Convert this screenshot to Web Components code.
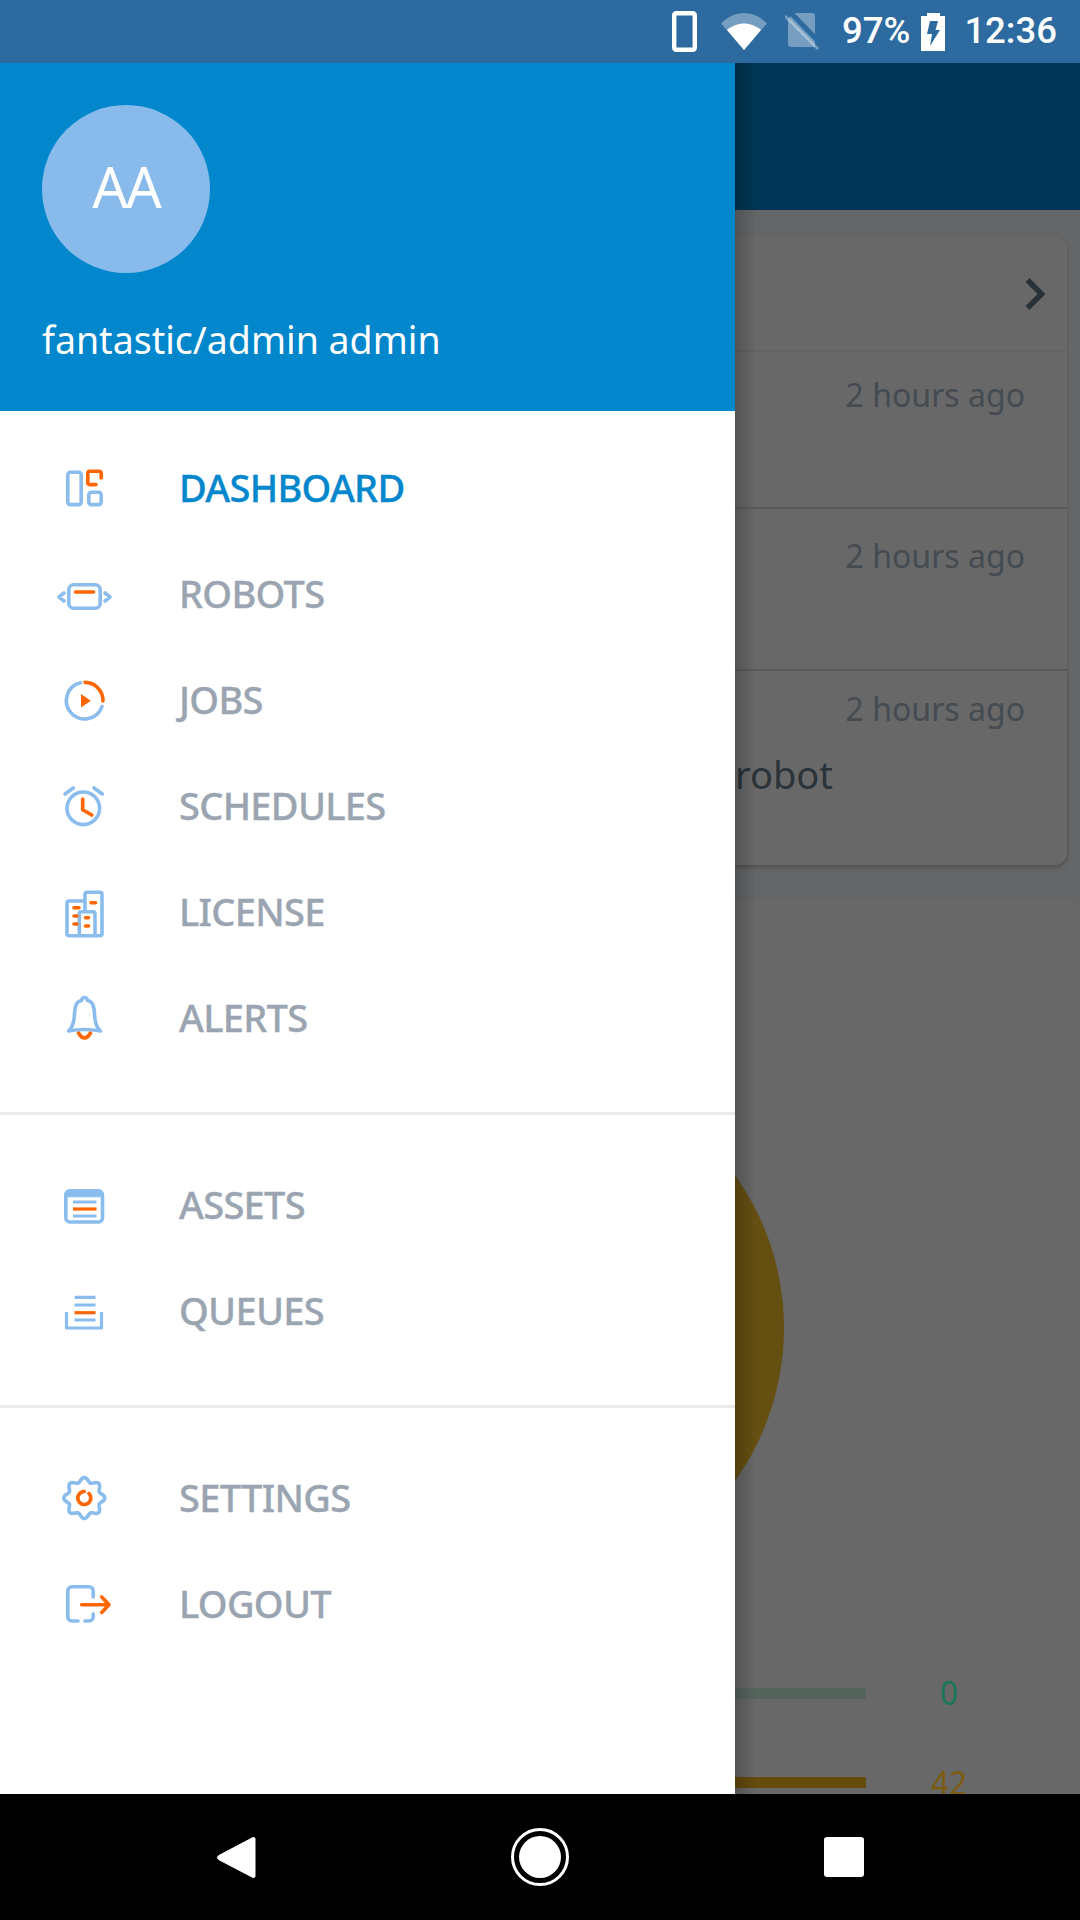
<!DOCTYPE html>
<html>
<head>
<meta charset="utf-8">
<style>
  html, body { margin: 0; padding: 0; background: #000; }
  body { width: 1080px; height: 1920px; overflow: hidden; font-family: "Noto Sans", sans-serif; display: flex; flex-direction: column; }
</style>
</head>
<body>
<status-bar></status-bar>
<app-screen>
  <nav-drawer slot="drawer" user="fantastic/admin admin" initials="AA">
    <menu-group>
      <menu-item icon="dashboard" active>DASHBOARD</menu-item>
      <menu-item icon="robots">ROBOTS</menu-item>
      <menu-item icon="jobs">JOBS</menu-item>
      <menu-item icon="schedules">SCHEDULES</menu-item>
      <menu-item icon="license">LICENSE</menu-item>
      <menu-item icon="alerts">ALERTS</menu-item>
    </menu-group>
    <menu-group>
      <menu-item icon="assets">ASSETS</menu-item>
      <menu-item icon="queues">QUEUES</menu-item>
    </menu-group>
    <menu-group last>
      <menu-item icon="settings">SETTINGS</menu-item>
      <menu-item icon="logout">LOGOUT</menu-item>
    </menu-group>
  </nav-drawer>
  <dimmed-page slot="page"></dimmed-page>
</app-screen>
<nav-bar></nav-bar>

<script>
// 歯車の輪郭。8つの山を持つ閉じた線を、中心(38.3, 25)の周りに作る。
function gearPath() {
  const points = [];
  for (let i = 0; i < 96; i++) {
    const t = i / 96 * Math.PI * 2;
    const r = 18.3 + 2.2 * Math.cos(8 * t);
    points.push((38.3 + r * Math.sin(t)).toFixed(2) + " " + (25 - r * Math.cos(t)).toFixed(2));
  }
  return "M" + points.join("L") + "z";
}

// 青とオレンジの2色で描くメニューアイコン。viewBoxは80x48で、行の中央に置く。
const ICONS = {
  dashboard: `<rect x="21.8" y="9.2" width="13.4" height="32.4" rx="2.5" class="b"/>
    <path d="M55.2 15V10.2a2 2 0 0 0-2-2H43.800a2 2 0 0 0-2 2v9.400a2 2 0 0 0 2 2H50" class="o"/>
    <rect x="42.8" y="29.2" width="12.4" height="12.4" rx="2.5" class="b"/>`,
  robots: `<rect x="22.8" y="15.8" width="31.4" height="23.4" rx="5" class="b"/>
    <path d="M29.500 23H47.500" class="o"/>
    <path d="M18 24 13 28l5 4M59 24l5 4-5 4" class="b"/>`,
  jobs: `<path d="M34.500 7.800A18.300 18.300 0 1 0 56 31.500" class="b"/>
    <path d="M39 7.400A18.300 18.300 0 0 1 57 26" class="o"/>
    <path d="M35 19 44.800 25.700 35 32.400z" fill="#ff6600"/>`,
  schedules: `<circle cx="37.300" cy="27.300" r="16.300" class="b"/>
    <path d="M19 13 27.300 7M48 7l8.300 6" class="b"/>
    <path d="M36.700 18V28.700L45.700 34" class="o"/>`,
  license: `<path d="M39 24V7.300a2 2 0 0 1 2-2h13a2 2 0 0 1 2 2v39.400a2 2 0 0 1-2 2H23a2 2 0 0 1-2-2V16a2 2 0 0 1 2-2h16" class="b"/>
    <path d="M33.300 48.700V26.700a2 2 0 0 1 2-2H47a2 2 0 0 1 2 2v22" class="b"/>
    <path d="M28 20.700h5M45 15.700h4.500M28 29h3M28 37h3M39.500 30.700h3M39.500 39h3" class="o"/>`,
  alerts: `<path d="M32.500 40Q38.500 50 44.500 40" class="o"/>
    <path d="M22.500 38Q27 34 28 26L29 16Q30 8.500 35.500 7.500 36 4.500 38.500 4.500 41 4.500 41.500 7.500 47 8.500 48 16L49 26Q50 34 54.500 38 38.500 35 22.500 38z" class="b"/>`,
  assets: `<rect x="19.800" y="10.800" width="36.700" height="31.200" rx="4" class="b"/>
    <path d="M19.800 14.800a4 4 0 0 1 4-4h28.700a4 4 0 0 1 4 4v2H19.800z" fill="#8abdee" stroke="#8abdee"/>
    <path d="M27 22h23.500M27 36h23.500" class="b flat"/>
    <path d="M27 29h23.500" class="o flat"/>`,
  queues: `<path d="M28.500 11.300h21M28.500 19h21M28.500 34h21" class="b flat"/>
    <path d="M28.500 26.700h21" class="o flat"/>
    <path d="M20.500 26V42H55.500V26" class="b flat"/>`,
  settings: `<path d="${gearPath()}" class="b"/>
    <path d="M42.900 20.400A6.500 6.500 0 1 1 38.300 18.500" class="o"/>`,
  logout: `<path d="M47.200 18V11.800a4 4 0 0 0-4-4H25.800a4 4 0 0 0-4 4V38a4 4 0 0 0 4 4H32M39 42h4.200a4 4 0 0 0 4-4V35" class="b"/>
    <path d="M35.700 25.700H63M55.700 18 63 25.700 55.700 33.400" class="o"/>`,
};

class StatusBar extends HTMLElement {
  constructor() {
    super();
    this.attachShadow({mode: "open"}).innerHTML = `
<style>
  :host { display: flex; flex: none; height: 63px; background: #2c6a9f; color: #fff; align-items: center;
    font: 500 36.5px/1 Roboto, sans-serif; padding: 0 22px 0 672px; box-sizing: border-box; }
  svg { display: block; flex: none; }
  .pct { margin-left: 23px; }
  .batt { margin-left: 11px; }
  .time { margin-left: 19px; }
</style>
<svg width="25" height="41" viewBox="0 0 25 41"><rect x="2.200" y="2.200" width="20.600" height="36.600" rx="2" fill="none" stroke="#fff" stroke-width="4.400"/></svg>
<svg width="46" height="37" viewBox="0 0 46 37" style="margin-left:24px"><path d="M0 10.500C6 4.500 14 0 23 0s17 4.500 23 10.500L23 37z" fill="#fff" opacity=".35"/><path d="M6 17c5-4 11-6.500 17-6.500S35 13 40 17L23 37z" fill="#fff"/></svg>
<svg width="34" height="37" viewBox="0 0 34 37" style="margin-left:18px"><path d="M9 0H27a3 3 0 0 1 3 3V34H6a3 3 0 0 1-3-3V6z" fill="#fff" opacity=".35"/><path d="M5 -1 35 30" stroke="#2c6a9f" stroke-width="5"/><path d="M0 3 33 36" stroke="#fff" stroke-opacity=".35" stroke-width="3"/></svg>
<span class="pct">97%</span>
<svg class="batt" width="24" height="38" viewBox="0 0 24 38"><path d="M6 0H19V3H24V38H0V3H6z" fill="#fff"/><path d="M9 8H17L14.500 17H19L9 33 11 21H6z" fill="#2c6a9f"/></svg>
<span class="time">12:36</span>`;
  }
}

class NavBar extends HTMLElement {
  constructor() {
    super();
    this.attachShadow({mode: "open"}).innerHTML = `
<style>
  :host { display: block; flex: none; height: 126px; background: #000; }
  svg { display: block; }
</style>
<svg width="1080" height="126" viewBox="0 0 1080 126">
  <path d="M253 43.500a1.500 1.500 0 0 1 2 1.500v37a1.500 1.500 0 0 1-2 1.500L218.500 65.500a2.500 2.500 0 0 1 0-3.800z" fill="#fff" stroke="#fff" stroke-width="1"/>
  <circle cx="540" cy="63" r="27.500" fill="none" stroke="#fff" stroke-width="3"/>
  <circle cx="540" cy="63" r="21" fill="#fff"/>
  <rect x="824" y="43" width="40" height="40" rx="3" fill="#fff"/>
</svg>`;
  }
}

// ドロワーの裏で暗くなっている画面。色は暗転後の見た目をそのまま指定している。
class DimmedPage extends HTMLElement {
  constructor() {
    super();
    this.attachShadow({mode: "open"}).innerHTML = `
<style>
  :host { display: block; position: relative; height: 100%; overflow: hidden; background: #646668; }
  .bar { height: 147px; background: #003655; }
  .list { margin: 26px 13px 0 0; box-shadow: 1px 0 2px rgba(0,0,0,.1); border-radius: 0 12px 12px 0; }
  .card { position: relative; background: #686868; border-bottom: 2px solid #5a5b5c; display: flex; justify-content: flex-end; box-sizing: border-box;
    padding-right: 42px; font-size: 32px; line-height: 44px; color: #454b50; }
  .list .card:first-child { border-radius: 0 12px 0 0; border-bottom-color: #636465; height: 116px; padding-right: 22px; align-items: flex-start; }
  .list .card:last-child { border-radius: 0 0 12px 0; border-bottom: 0; box-shadow: 0 3px 4px rgba(0,0,0,.18); }
  .chev { margin-top: 42px; }
  .robot { position: absolute; left: 0; top: 78px; font-size: 38px; line-height: 50px; color: #2a3338; }
  .big { margin-top: 34px; height: 900px; background: #686868; border-radius: 0 14px 0 0; position: relative; }
  .pie { position: absolute; left: -477px; top: 166px; width: 526px; height: 526px; border-radius: 50%; background: #655012; }
  .row { position: absolute; left: 0; width: 131px; height: 11px; }
  .num { position: absolute; width: 100px; left: 164px; text-align: center; font-size: 32px; line-height: 40px; }
  .shadow { position: absolute; left: 0; top: 0; bottom: 0; width: 22px; background: linear-gradient(90deg, rgba(0,0,0,.2), rgba(0,0,0,0)); }
</style>
<div class="bar"></div>
<div class="list">
  <div class="card"><svg class="chev" width="20" height="32" viewBox="0 0 20 32"><path d="M2.500 2 16.500 16 2.500 30" fill="none" stroke="#293237" stroke-width="5.500"/></svg></div>
  <div class="card" style="height:157px;padding-top:21px">2 hours ago</div>
  <div class="card" style="height:162px;padding-top:25px">2 hours ago</div>
  <div class="card" style="height:194px;padding-top:16px">2 hours ago<span class="robot">robot</span></div>
</div>
<div class="big">
  <div class="pie"></div>
  <div class="row" style="top:789px;background:#55655e"></div>
  <div class="num" style="top:774px;color:#1b7558">0</div>
  <div class="row" style="top:878px;background:#654b0c"></div>
  <div class="num" style="top:864px;color:#7b5c10">42</div>
</div>
<div class="shadow"></div>`;
  }
}

class AppScreen extends HTMLElement {
  constructor() {
    super();
    this.attachShadow({mode: "open"}).innerHTML = `
<style>
  :host { display: flex; flex: 1; min-height: 0; background: #fff; }
  ::slotted([slot=drawer]) { flex: none; width: 735px; }
  ::slotted([slot=page]) { flex: 1; min-width: 0; }
</style>
<slot name="drawer"></slot><slot name="page"></slot>`;
  }
}

class NavDrawer extends HTMLElement {
  constructor() {
    super();
    this.attachShadow({mode: "open"}).innerHTML = `
<style>
  :host { display: block; background: #fff; }
  header { background: #0286cc; height: 348px; box-sizing: border-box; padding: 42px 0 0 42px; color: #fff; }
  .avatar { width: 168px; height: 168px; border-radius: 50%; background: #88bbeb; display: flex; align-items: center; justify-content: center; font-size: 56px; letter-spacing: -2px; padding-bottom: 6px; box-sizing: border-box; }
  .user { margin-top: 42px; font-size: 37.5px; line-height: 50px; }
  .menu { padding-top: 23px; }
</style>
<header><div class="avatar"></div><div class="user"></div></header>
<div class="menu"><slot></slot></div>`;
  }
  connectedCallback() {
    this.shadowRoot.querySelector(".avatar").textContent = this.getAttribute("initials");
    this.shadowRoot.querySelector(".user").textContent = this.getAttribute("user");
  }
}

class MenuGroup extends HTMLElement {
  constructor() {
    super();
    this.attachShadow({mode: "open"}).innerHTML = `
<style>
  :host { display: block; border-bottom: 3px solid #e9eaeb; padding-bottom: 42px; margin-bottom: 36px; }
  :host([last]) { border-bottom: 0; margin-bottom: 0; padding-bottom: 0; }
</style>
<slot></slot>`;
  }
}

class MenuItem extends HTMLElement {
  constructor() {
    super();
    this.attachShadow({mode: "open"}).innerHTML = `
<style>
  :host { display: flex; align-items: center; height: 106px; font-size: 38px; font-weight: 500; letter-spacing: -0.7px; color: #9aa5b1; -webkit-text-stroke: 0.3px; }
  :host([active]) { color: #0286cc; }
  svg { flex: none; display: block; width: 80px; height: 48px; margin: 0 53px 0 46px; overflow: visible; }
  .b, .o { fill: none; stroke-width: 3.6; stroke-linecap: round; stroke-linejoin: round; }
  .flat { stroke-linecap: butt; stroke-width: 3.2; }
  .b { stroke: #8abdee; }
  .o { stroke: #ff6600; }
</style>
<svg viewBox="0 0 80 48"></svg><slot></slot>`;
  }
  connectedCallback() {
    this.shadowRoot.querySelector("svg").innerHTML = ICONS[this.getAttribute("icon")] || "";
  }
}

customElements.define("status-bar", StatusBar);
customElements.define("nav-bar", NavBar);
customElements.define("dimmed-page", DimmedPage);
customElements.define("app-screen", AppScreen);
customElements.define("nav-drawer", NavDrawer);
customElements.define("menu-group", MenuGroup);
customElements.define("menu-item", MenuItem);
</script>
</body>
</html>
